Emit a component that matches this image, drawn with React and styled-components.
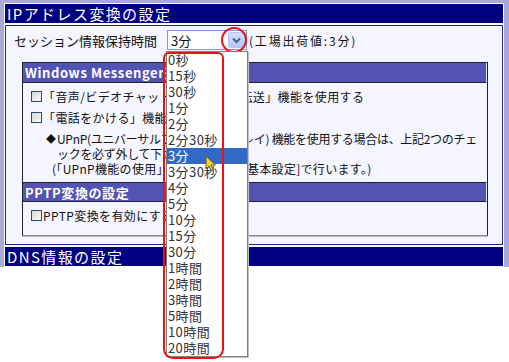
import styled, { createGlobalStyle } from 'styled-components';

const GlobalStyle = createGlobalStyle`
  html, body { margin: 0; padding: 0; background: #ffffff; }
  body { font-family: "Noto Sans CJK JP", "DejaVu Sans", sans-serif; color: #111; }
`;

const Page = styled.div`
  position: relative;
  width: 509px;
  height: 362px;
  overflow: hidden;
  background: #ffffff;
`;

const Frame = styled.div`
  width: 509px;
  box-sizing: border-box;
  padding: 3px 5px 0 4px;
  background: #a9a9d6;
`;

const SectionHead = styled.div`
  height: 21px;
  box-sizing: border-box;
  border: 1px solid #ffffff;
  background: #000080;
  color: #ffffff;
  font-size: 15px;
  line-height: 19px;
  padding-left: 2px;
  letter-spacing: 1.4px;
`;

const SectionBody = styled.div`
  border: 1px solid #ffffff;
  box-shadow: inset 0 0 0 1px #22229a;
  background: #f5f5ff;
  padding: 5px 15px 9px 17px;
`;

const SettingRow = styled.div`
  display: flex;
  align-items: center;
  height: 20px;
  font-size: 13px;
  margin-left: -8px;
`;

const Label = styled.span`
  width: 153px;
`;

const SelectWrap = styled.div`
  position: relative;
  width: 80px;
  height: 20px;
  box-sizing: border-box;
  border: 1px solid #7f9db9;
  background: #ffffff;
  display: flex;
  align-items: center;
  padding-left: 3px;
  margin-right: 2px;
`;

const SelectValue = styled.span`
  flex: 1;
  font-size: 13px;
`;

const DropButton = styled.div`
  width: 17px;
  height: 16px;
  margin-right: 1px;
  border: 1px solid #b5c8f7;
  border-radius: 2px;
  box-sizing: border-box;
  background: linear-gradient(#d2defc, #b2c6f5);
  display: flex;
  align-items: center;
  justify-content: center;
`;

const RedCircle = styled.div`
  position: absolute;
  left: 53px;
  top: -4px;
  width: 26px;
  height: 26px;
  box-sizing: border-box;
  border: 2px solid #ee1111;
  border-radius: 50%;
`;

const Note = styled.span`
  font-size: 12px;
  letter-spacing: 1.8px;
`;

const InnerBox = styled.div`
  margin-top: 12px;
  border: 1px solid #222222;
  border-bottom-color: #888888;
  box-shadow: 0 1px 0 #bbbbbb;
  font-size: 12px;
  white-space: nowrap;
`;

const InnerHead = styled.div`
  height: 20px;
  box-sizing: border-box;
  background: #5353b3;
  color: #ffffff;
  font-weight: bold;
  font-size: 13px;
  line-height: 19px;
  padding-left: 2px;
  letter-spacing: 0.6px;
  border-top: ${(p) => (p.$divider ? '1px solid #222' : 'none')};
  border-bottom: 1px solid #222222;
  border-right: 1px solid #e8e8ff;
`;

const InnerContent = styled.div`
  padding: ${(p) => p.$pad || '3px 0 6px 8px'};
`;

const CheckRow = styled.div`
  display: flex;
  align-items: center;
  height: 21px;
  letter-spacing: 0.4px;
`;

const Check = styled.span`
  width: 11px;
  height: 11px;
  box-sizing: border-box;
  border: 1px solid #1c5180;
  background: linear-gradient(135deg, #d8d8d4, #f8f8f6);
  margin-right: 1px;
`;

const Bullet = styled.div`
  display: flex;
  padding-left: 15px;
  line-height: 15px;
  margin-top: 3px;
  letter-spacing: -0.3px;
`;

const Diamond = styled.span`
  width: 11px;
  font-size: 10px;
  flex-shrink: 0;
`;

const Paren = styled.div`
  padding-left: 21px;
  line-height: 15px;
  letter-spacing: 0.3px;
`;

const List = styled.ul`
  position: absolute;
  left: -2px;
  top: 20px;
  width: 80px;
  margin: 0;
  padding: 0;
  list-style: none;
  background: #ffffff;
  border: 1px solid #7f7f7f;
  box-shadow: 1px 1px 0 #c0c0c0;
  z-index: 2;
`;

const Item = styled.li`
  height: 16px;
  line-height: 16px;
  font-size: 13px;
  padding-left: 1px;
  letter-spacing: 0.4px;
  color: ${(p) => (p.$selected ? '#ffffff' : '#333')};
  background: ${(p) => (p.$selected ? '#316ac5' : 'transparent')};
`;

const RedFrame = styled.div`
  position: absolute;
  left: -5px;
  top: 21px;
  width: 61px;
  height: 307px;
  box-sizing: border-box;
  border: 2px solid #ee1111;
  border-radius: 6px 6px 10px 10px;
  z-index: 3;
`;

const Cursor = styled.svg`
  position: absolute;
  left: 37px;
  top: 124px;
  z-index: 4;
`;

const options = [
  '0秒', '15秒', '30秒', '1分', '2分', '2分30秒', '3分', '3分30秒', '4分', '5分',
  '10分', '15分', '30分', '1時間', '2時間', '3時間', '5時間', '10時間', '20時間',
];

export default function App() {
  return (
    <Page>
      <GlobalStyle />
      <Frame>
        <SectionHead>IPアドレス変換の設定</SectionHead>
        <SectionBody>
          <SettingRow>
            <Label>セッション情報保持時間</Label>
            <SelectWrap>
              <SelectValue>3分</SelectValue>
              <DropButton>
                <svg width="9" height="7" viewBox="0 0 9 7">
                  <path d="M1 1.5 L4.5 5 L8 1.5" fill="none" stroke="#4d6185" strokeWidth="2" />
                </svg>
              </DropButton>
              <RedCircle />
              <List>
                {options.map((o) => (
                  <Item key={o} $selected={o === '3分'}>{o}</Item>
                ))}
              </List>
              <RedFrame />
              <Cursor width="12" height="17" viewBox="0 0 12 17">
                <path d="M1 1 L1 14 L4 11 L6.5 16 L8.5 15 L6 10 L10.5 10 Z" fill="#ffd21a" stroke="#555" strokeWidth="1" />
              </Cursor>
            </SelectWrap>
            <Note>(工場出荷値:3分)</Note>
          </SettingRow>

          <InnerBox>
            <InnerHead>Windows Messenger連携の設定</InnerHead>
            <InnerContent>
              <CheckRow><Check />「音声/ビデオチャット」「ファイル転送」機能を使用する</CheckRow>
              <CheckRow><Check />「電話をかける」機能を使用する</CheckRow>
              <Bullet>
                <Diamond>◆</Diamond>
                <span>
                  UPnP(ユニバーサルプラグアンドプレイ) 機能を使用する場合は、上記2つのチェ<br />
                  ックを必ず外して下さい。
                </span>
              </Bullet>
              <Paren>(「UPnP機能の使用」の切り替えは[基本設定]で行います。)</Paren>
            </InnerContent>
            <InnerHead $divider>PPTP変換の設定</InnerHead>
            <InnerContent $pad="3px 0 9px 8px">
              <CheckRow><Check />PPTP変換を有効にする</CheckRow>
            </InnerContent>
          </InnerBox>
        </SectionBody>
        <SectionHead>DNS情報の設定</SectionHead>
      </Frame>
    </Page>
  );
}
